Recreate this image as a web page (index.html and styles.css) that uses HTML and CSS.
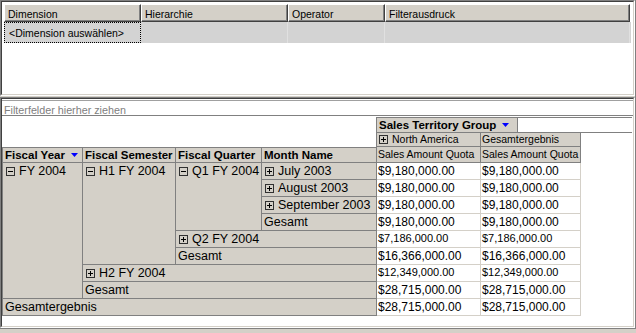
FILE: index.html
```html
<!DOCTYPE html>
<html lang="de">
<head>
    <meta charset="UTF-8">
    <title>Pivot-Tabelle</title>
    <link rel="stylesheet" href="styles.css">
</head>
<body>
    <div class="window">

        <section class="panel top-panel">
            <div class="panel-inner">
                <div class="filter-head">
                    <div class="head-cell">Dimension</div>
                    <div class="head-cell">Hierarchie</div>
                    <div class="head-cell">Operator</div>
                    <div class="head-cell">Filterausdruck</div>
                </div>
                <div class="filter-row">
                    <div class="row-cell focused">&lt;Dimension auswählen&gt;</div>
                    <div class="row-cell"></div>
                    <div class="row-cell"></div>
                    <div class="row-cell"></div>
                </div>
            </div>
        </section>

        <section class="panel pivot-panel">
            <div class="panel-inner">
                <div class="drop-zone">Filterfelder hierher ziehen</div>

                <div class="pivot">
                    <!-- column axis -->
                    <div class="blank span4"></div>
                    <div class="axis-title span2">Sales Territory Group<svg class="sort-arrow" viewBox="0 0 7 4"><path d="M0 0h7L3.5 4z" fill="#0000ff"/></svg></div>
                    <div class="axis-rest span2"></div>

                    <div class="blank span4"></div>
                    <div class="col-member lead"><svg class="toggle" viewBox="0 0 9 9"><rect x="0.5" y="0.5" width="8" height="8" fill="none" stroke="#303030"/><path d="M2 4.5h5M4.5 2v5" stroke="#000"/></svg>North America</div>
                    <div class="col-member span2">Gesamtergebnis</div>
                    <div class="blank"></div>

                    <!-- row axis fields -->
                    <div class="field first">Fiscal Year<svg class="sort-arrow" viewBox="0 0 7 4"><path d="M0 0h7L3.5 4z" fill="#0000ff"/></svg></div>
                    <div class="field">Fiscal Semester</div>
                    <div class="field">Fiscal Quarter</div>
                    <div class="field">Month Name</div>
                    <div class="measure">Sales Amount Quota</div>
                    <div class="measure span2">Sales Amount Quota</div>
                    <div class="blank"></div>

                    <!-- rows -->
                    <div class="member first rows8"><svg class="toggle" viewBox="0 0 9 9"><rect x="0.5" y="0.5" width="8" height="8" fill="none" stroke="#303030"/><path d="M2 4.5h5" stroke="#000"/></svg>FY 2004</div>
                    <div class="member rows6"><svg class="toggle" viewBox="0 0 9 9"><rect x="0.5" y="0.5" width="8" height="8" fill="none" stroke="#303030"/><path d="M2 4.5h5" stroke="#000"/></svg>H1 FY 2004</div>
                    <div class="member rows4"><svg class="toggle" viewBox="0 0 9 9"><rect x="0.5" y="0.5" width="8" height="8" fill="none" stroke="#303030"/><path d="M2 4.5h5" stroke="#000"/></svg>Q1 FY 2004</div>
                    <div class="member"><svg class="toggle" viewBox="0 0 9 9"><rect x="0.5" y="0.5" width="8" height="8" fill="none" stroke="#303030"/><path d="M2 4.5h5M4.5 2v5" stroke="#000"/></svg>July 2003</div>
                    <div class="value">$9,180,000.00</div>
                    <div class="value span2">$9,180,000.00</div>
                    <div class="blank"></div>

                    <div class="member"><svg class="toggle" viewBox="0 0 9 9"><rect x="0.5" y="0.5" width="8" height="8" fill="none" stroke="#303030"/><path d="M2 4.5h5M4.5 2v5" stroke="#000"/></svg>August 2003</div>
                    <div class="value">$9,180,000.00</div>
                    <div class="value span2">$9,180,000.00</div>
                    <div class="blank"></div>

                    <div class="member"><svg class="toggle" viewBox="0 0 9 9"><rect x="0.5" y="0.5" width="8" height="8" fill="none" stroke="#303030"/><path d="M2 4.5h5M4.5 2v5" stroke="#000"/></svg>September 2003</div>
                    <div class="value">$9,180,000.00</div>
                    <div class="value span2">$9,180,000.00</div>
                    <div class="blank"></div>

                    <div class="member">Gesamt</div>
                    <div class="value">$9,180,000.00</div>
                    <div class="value span2">$9,180,000.00</div>
                    <div class="blank"></div>

                    <div class="member span2"><svg class="toggle" viewBox="0 0 9 9"><rect x="0.5" y="0.5" width="8" height="8" fill="none" stroke="#303030"/><path d="M2 4.5h5M4.5 2v5" stroke="#000"/></svg>Q2 FY 2004</div>
                    <div class="value collapsed">$7,186,000.00</div>
                    <div class="value collapsed span2">$7,186,000.00</div>
                    <div class="blank"></div>

                    <div class="member span2">Gesamt</div>
                    <div class="value">$16,366,000.00</div>
                    <div class="value span2">$16,366,000.00</div>
                    <div class="blank"></div>

                    <div class="member span3"><svg class="toggle" viewBox="0 0 9 9"><rect x="0.5" y="0.5" width="8" height="8" fill="none" stroke="#303030"/><path d="M2 4.5h5M4.5 2v5" stroke="#000"/></svg>H2 FY 2004</div>
                    <div class="value collapsed">$12,349,000.00</div>
                    <div class="value collapsed span2">$12,349,000.00</div>
                    <div class="blank"></div>

                    <div class="member span3">Gesamt</div>
                    <div class="value">$28,715,000.00</div>
                    <div class="value span2">$28,715,000.00</div>
                    <div class="blank"></div>

                    <div class="member first span4">Gesamtergebnis</div>
                    <div class="value">$28,715,000.00</div>
                    <div class="value span2">$28,715,000.00</div>
                    <div class="blank"></div>
                </div>
            </div>
        </section>

    </div>
</body>
</html>
```

FILE: styles.css
```css
body {
    margin: 0;
    background-color: #d4d0c8;
    font-family: 'Liberation Sans', Arial, sans-serif;
    color: #000;
}

.window {
    width: 635px;
    height: 328px;
    border-right: 1px solid #808080;
    border-bottom: 1px solid #808080;
    display: flex;
    flex-direction: column;
    gap: 1px;
}

/* sunken 3d frame: outer + inner border */
.panel {
    border-style: solid;
    border-width: 1px;
    border-color: #808080 #ffffff #ffffff #808080;
}

.top-panel {
    height: 96px;
    box-sizing: border-box;
}

.pivot-panel {
    flex: 1;
}

.panel-inner {
    height: 100%;
    box-sizing: border-box;
    border-style: solid;
    border-width: 1px;
    border-color: #404040 #d4d0c8 #d4d0c8 #404040;
    background-color: #ffffff;
}

.top-panel .panel-inner {
    padding: 2px;
}

/* filter grid */
.filter-head,
.filter-row {
    display: grid;
    grid-template-columns: 137px 147px 97px 245px;
}

.head-cell {
    height: 18px;
    box-sizing: border-box;
    background-color: #d4d0c8;
    border-style: solid;
    border-width: 1px;
    border-color: #ffffff #404040 #404040 #ffffff;
    box-shadow: inset -1px -1px 0 #808080;
    font-size: 10.5px;
    line-height: 12px;
    padding: 3px 0 0 3px;
}

.filter-row {
    height: 21px;
    background-color: #d3d3d3;
}

.row-cell {
    border-right: 1px solid #e0e0e0;
    font-size: 10.5px;
    line-height: 19px;
    padding: 2px 0 0 5px;
}

.row-cell.focused {
    outline: 1px dotted #000;
    outline-offset: -1px;
}

/* pivot area */
.drop-zone {
    margin-top: 1px;
    height: 16px;
    box-sizing: border-box;
    border-top: 1px solid #a0a0a0;
    border-bottom: 1px solid #808080;
    padding: 3px 0 0 2px;
    font-size: 10.75px;
    line-height: 12px;
    color: #808080;
}

.pivot {
    margin-top: 1px;
    display: grid;
    grid-template-columns: 81px 93px 86px 115px 104px 37px 63px 51px;
    grid-template-rows: 16px 14px 16px repeat(9, 17px);
}

.pivot > div {
    box-sizing: border-box;
    white-space: nowrap;
    overflow: hidden;
}

.span2 { grid-column: span 2; }
.span3 { grid-column: span 3; }
.span4 { grid-column: span 4; }
.rows4 { grid-row: span 4; }
.rows6 { grid-row: span 6; }
.rows8 { grid-row: span 8; }

.axis-title {
    margin-left: -1px;
    border: 1px solid #808080;
    background-color: #d4d0c8;
    font-size: 11.5px;
    font-weight: bold;
    line-height: 14px;
    padding-left: 2px;
}

.axis-rest {
    border-top: 1px solid #808080;
    border-bottom: 1px solid #808080;
}

.col-member {
    background-color: #d4d0c8;
    border-right: 1px solid #808080;
    border-bottom: 1px solid #808080;
    font-size: 10.5px;
    line-height: 13px;
    padding-left: 1px;
}

.col-member.lead {
    margin-left: -1px;
    border-left: 1px solid #808080;
}

.field {
    background-color: #d4d0c8;
    border-top: 1px solid #808080;
    border-right: 1px solid #808080;
    border-bottom: 1px solid #808080;
    font-size: 11.5px;
    font-weight: bold;
    line-height: 14px;
    padding-left: 2px;
}

.measure {
    background-color: #d4d0c8;
    border-right: 1px solid #808080;
    border-bottom: 1px solid #808080;
    font-size: 10.5px;
    line-height: 15px;
    padding-left: 1px;
}

.member {
    background-color: #d4d0c8;
    border-right: 1px solid #808080;
    border-bottom: 1px solid #808080;
    font-size: 12.5px;
    line-height: 16px;
    padding-left: 2px;
}

.first {
    border-left: 1px solid #808080;
}

.value {
    border-right: 1px solid #d4d0c8;
    border-bottom: 1px solid #d4d0c8;
    font-size: 12px;
    line-height: 16px;
    padding-left: 1px;
}

.value.collapsed {
    font-size: 11px;
    line-height: 15px;
}

.toggle {
    width: 9px;
    height: 9px;
    margin: 0 4px 0 1px;
    vertical-align: -1px;
}

.sort-arrow {
    width: 7px;
    height: 4px;
    margin-left: 6px;
    vertical-align: 2px;
}
```
